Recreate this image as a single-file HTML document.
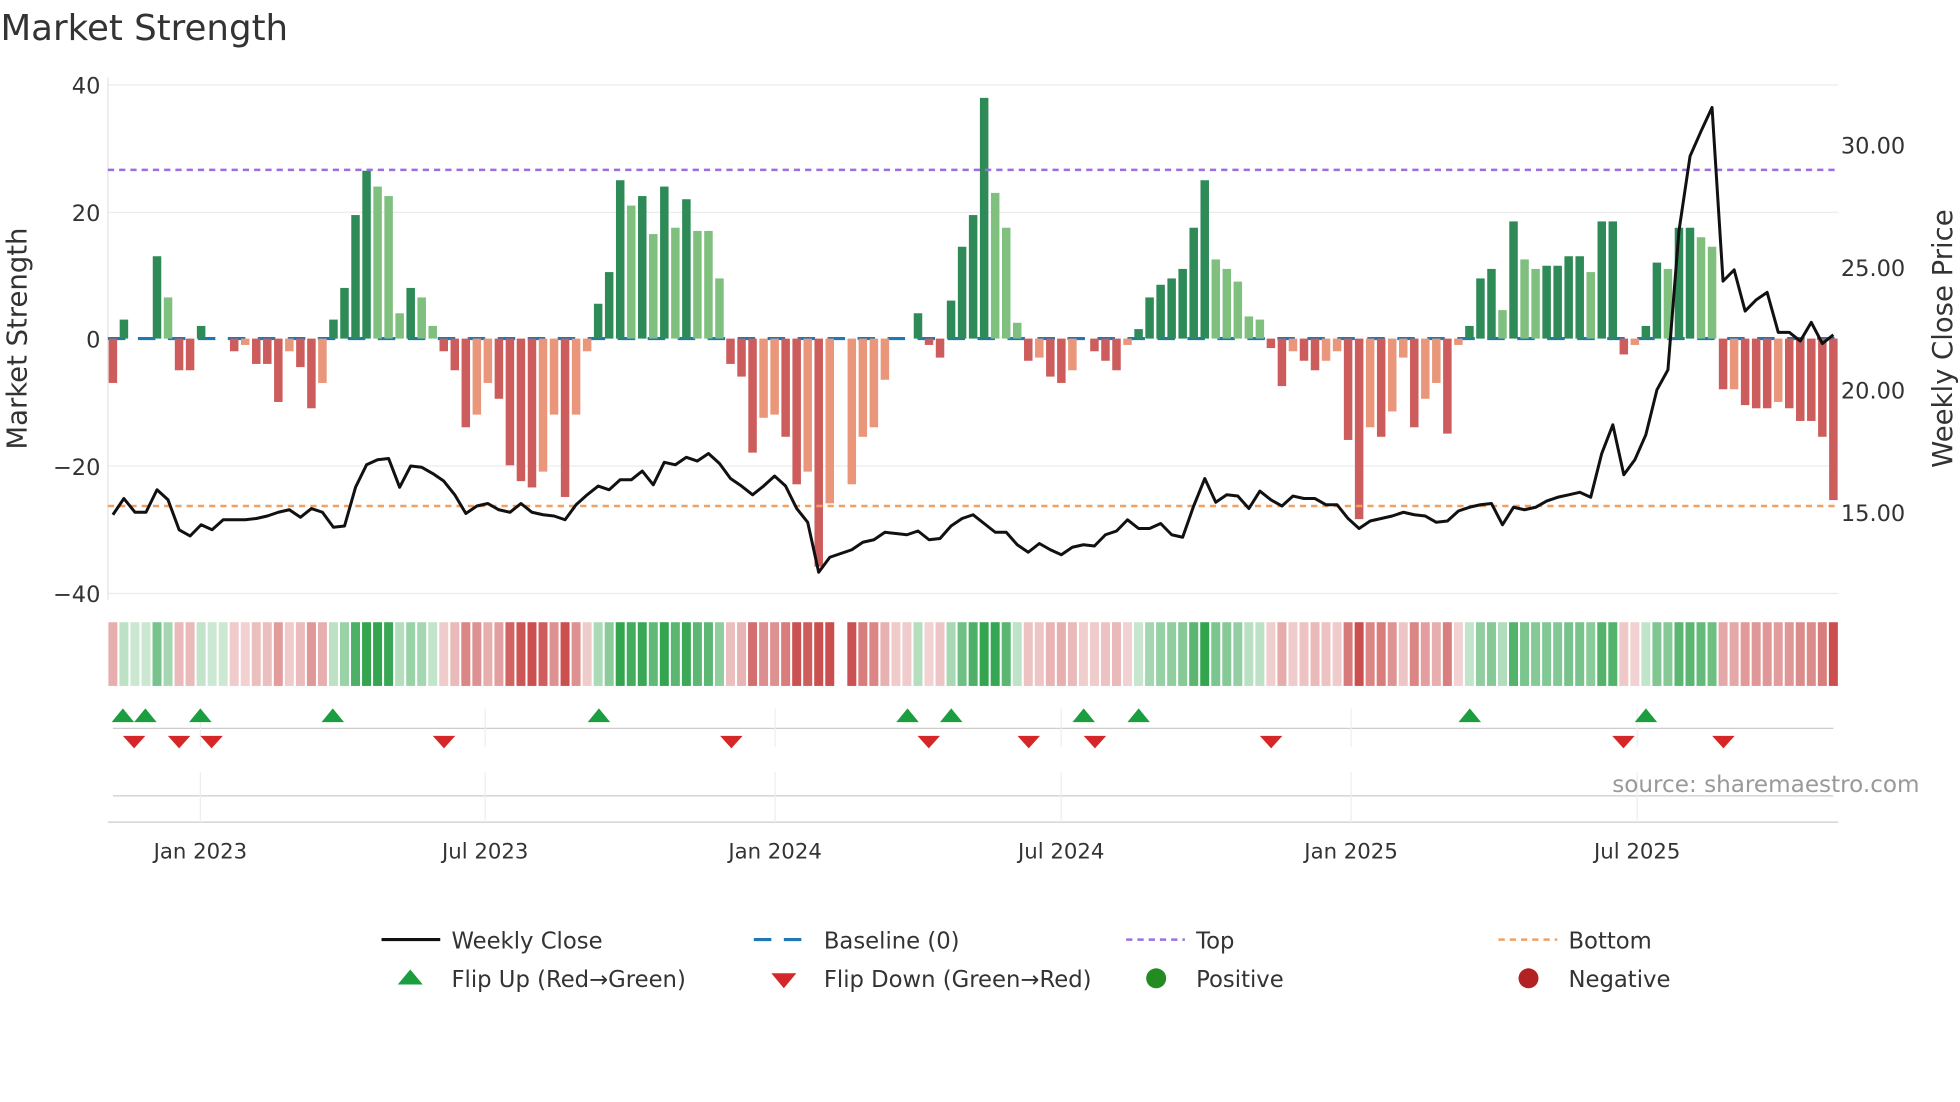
<!DOCTYPE html>
<html><head><meta charset="utf-8"><style>
html,body{margin:0;padding:0;background:#fff;width:1960px;height:1102px;overflow:hidden}
svg{display:block;font-family:"DejaVu Sans","Liberation Sans",sans-serif}
</style></head><body>
<svg id="s" width="1960" height="1102" viewBox="0 0 1568 882" xmlns="http://www.w3.org/2000/svg">
<rect width="1568" height="882" fill="#fff"/>
<text x="0" y="32" font-size="28.5" fill="#333">Market Strength</text>
<g stroke="#ececec" stroke-width="1">
<line x1="86" y1="68" x2="1471" y2="68"/><line x1="86" y1="170" x2="1471" y2="170"/>
<line x1="86" y1="373" x2="1471" y2="373"/><line x1="86" y1="475" x2="1471" y2="475"/>
</g>
<line x1="86" y1="62" x2="86" y2="480" stroke="#e4e4e4"/>
<g font-size="18" fill="#333" text-anchor="end">
<text x="80" y="75">40</text><text x="80" y="177">20</text><text x="80" y="278">0</text>
<text x="80" y="380">−20</text><text x="80" y="482">−40</text></g>
<g font-size="18" fill="#333">
<text x="1473" y="123">30.00</text><text x="1473" y="221">25.00</text>
<text x="1473" y="319">20.00</text><text x="1473" y="417">15.00</text></g>
<text transform="translate(21,271) rotate(-90)" font-size="22" fill="#333" text-anchor="middle">Market Strength</text>
<text transform="translate(1562,271) rotate(-90)" font-size="22" fill="#333" text-anchor="middle">Weekly Close Price</text>
<line x1="86" y1="271" x2="1471" y2="271" stroke="#1f77b4" stroke-width="2.5" stroke-dasharray="14,10"/>
<g id="bars"></g>
<line x1="86" y1="136" x2="1471" y2="136" stroke="#9b6fe0" stroke-width="2" stroke-dasharray="5,4"/>
<line x1="86" y1="405" x2="1471" y2="405" stroke="#f0a060" stroke-width="2" stroke-dasharray="5,4"/>
<polyline id="price" fill="none" stroke="#111" stroke-width="2.4" stroke-linejoin="round"/>
<g id="heat"></g>
<line x1="90" y1="583" x2="1467" y2="583" stroke="#ccc"/>
<line x1="90" y1="637" x2="1467" y2="637" stroke="#ccc"/>
<line x1="86" y1="658" x2="1471" y2="658" stroke="#ccc"/>
<g stroke="#eee"><line x1="160" y1="567" x2="160" y2="598"/><line x1="388" y1="567" x2="388" y2="598"/><line x1="620" y1="567" x2="620" y2="598"/><line x1="849" y1="567" x2="849" y2="598"/><line x1="1081" y1="567" x2="1081" y2="598"/><line x1="1310" y1="567" x2="1310" y2="598"/>
<line x1="160" y1="618" x2="160" y2="658"/><line x1="388" y1="618" x2="388" y2="658"/><line x1="620" y1="618" x2="620" y2="658"/><line x1="849" y1="618" x2="849" y2="658"/><line x1="1081" y1="618" x2="1081" y2="658"/><line x1="1310" y1="618" x2="1310" y2="658"/></g>
<g id="marks"></g>
<text x="1536" y="634" font-size="18.5" fill="#999" text-anchor="end">source: sharemaestro.com</text>
<g font-size="17" fill="#333" text-anchor="middle">
<text x="160" y="687">Jan 2023</text><text x="388" y="687">Jul 2023</text><text x="620" y="687">Jan 2024</text>
<text x="849" y="687">Jul 2024</text><text x="1081" y="687">Jan 2025</text><text x="1310" y="687">Jul 2025</text></g>
<g font-size="18.2" fill="#333">
<line x1="305" y1="752" x2="352" y2="752" stroke="#111" stroke-width="2.5"/><text x="361" y="759">Weekly Close</text>
<line x1="603" y1="752" x2="650" y2="752" stroke="#1f77b4" stroke-width="2.5" stroke-dasharray="14,10"/><text x="659" y="759">Baseline (0)</text>
<line x1="901" y1="752" x2="948" y2="752" stroke="#9b6fe0" stroke-width="2" stroke-dasharray="5,4"/><text x="957" y="759">Top</text>
<line x1="1199" y1="752" x2="1246" y2="752" stroke="#f0a060" stroke-width="2" stroke-dasharray="5,4"/><text x="1255" y="759">Bottom</text>
<polygon points="318,788 338,788 328,776" fill="#1a9e3f"/><text x="361" y="790">Flip Up (Red→Green)</text>
<polygon points="617,779 637,779 627,791" fill="#d62728"/><text x="659" y="790">Flip Down (Green→Red)</text>
<circle cx="925" cy="783" r="8" fill="#228b22"/><text x="957" y="790">Positive</text>
<circle cx="1223" cy="783" r="8" fill="#b22222"/><text x="1255" y="790">Negative</text>
</g>
</svg>
<script>
var NS="http://www.w3.org/2000/svg";
var B=[[-7,3],[3,1],[0,0],[0,0],[13,1],[6.5,2],[-5,3],[-5,3],[2,1],[0,0],[0,0],[-2,3],[-1,4],[-4,3],[-4,3],[-10,3],[-2,4],[-4.5,3],[-11,3],[-7,4],[3,1],[8,1],[19.5,1],[26.5,1],[24,2],[22.5,2],[4,2],[8,1],[6.5,2],[2,2],[-2,3],[-5,3],[-14,3],[-12,4],[-7,4],[-9.5,3],[-20,3],[-22.5,3],[-23.5,3],[-21,4],[-12,4],[-25,3],[-12,4],[-2,4],[5.5,1],[10.5,1],[25,1],[21,2],[22.5,1],[16.5,2],[24,1],[17.5,2],[22,1],[17,2],[17,2],[9.5,2],[-4,3],[-6,3],[-18,3],[-12.5,4],[-12,4],[-15.5,3],[-23,3],[-21,4],[-36,3],[-26,4],[0,0],[-23,4],[-15.5,4],[-14,4],[-6.5,4],[0,0],[0,0],[4,1],[-1,3],[-3,3],[6,1],[14.5,1],[19.5,1],[38,1],[23,2],[17.5,2],[2.5,2],[-3.5,3],[-3,4],[-6,3],[-7,3],[-5,4],[0,0],[-2,3],[-3.5,3],[-5,3],[-1,4],[1.5,1],[6.5,1],[8.5,1],[9.5,1],[11,1],[17.5,1],[25,1],[12.5,2],[11,2],[9,2],[3.5,2],[3,2],[-1.5,3],[-7.5,3],[-2,4],[-3.5,3],[-5,3],[-3.5,4],[-2,4],[-16,3],[-28.5,3],[-14,4],[-15.5,3],[-11.5,4],[-3,4],[-14,3],[-9.5,4],[-7,4],[-15,3],[-1,4],[2,1],[9.5,1],[11,1],[4.5,2],[18.5,1],[12.5,2],[11,2],[11.5,1],[11.5,1],[13,1],[13,1],[10.5,2],[18.5,1],[18.5,1],[-2.5,3],[-1,4],[2,1],[12,1],[11,2],[17.5,1],[17.5,1],[16,2],[14.5,2],[-8,3],[-8,4],[-10.5,3],[-11,3],[-11,3],[-10,4],[-11,3],[-13,3],[-13,3],[-15.5,3],[-25.5,3]];
var P=[412,399,410,410,392,400,424,429,420,424,416,416,416,415,413,410,408,414,407,410,422,421,390,372,368,367,390,373,374,379,385,396,411,405,403,408,410,403,410,412,413,416,404,396,389,392,384,384,377,388,370,372,366,369,363,371,383,389,396,389,381,389,407,418,458,446,443,440,434,432,426,427,428,425,432,431,421,415,412,419,426,426,436,442,435,440,444,438,436,437,428,425,416,423,423,419,428,430,405,383,402,396,397,407,393,400,405,397,399,399,404,404,415,423,417,415,413,410,412,413,418,417,409,406,404,403,420,406,408,406,401,398,396,394,398,363,340,380,368,348,312,296,185,125,105,86,225,216,249,240,234,266,266,273,258,275,268];
var n=B.length,step=(1467-90)/(n-1),cols={1:"#2e8b57",2:"#7fc07f",3:"#cd5c5c",4:"#e9967a"};
var g=document.getElementById("bars"),h=document.getElementById("heat"),pts=[];
function r(p,x,y,w,hh,f){var e=document.createElementNS(NS,"rect");e.setAttribute("x",x);e.setAttribute("y",y);e.setAttribute("width",w);e.setAttribute("height",hh);e.setAttribute("fill",f);p.appendChild(e);}
var prev=0;
for(var i=0;i<n;i++){var x=90+i*step,v=B[i][0],t=B[i][1];
 if(t){var y=271-v*5.07;r(g,x-3.4,Math.min(y,271),6.8,Math.abs(v*5.07),cols[t]);}
 if(i==66)continue;
 var vv=v;if(!t)vv=prev*0.3;else prev=v;
 var a=Math.min(0.95,0.22+Math.abs(vv)/32);var c=vv>=0?"rgba(40,160,70,"+a+")":"rgba(200,70,70,"+a+")";r(h,x-3.6,498,7.2,51,c);
}
var m=Math.min(n,P.length);for(i=0;i<m;i++)pts.push((90+i*step).toFixed(1)+","+P[i]);
document.getElementById("price").setAttribute("points",pts.join(" "));
var mk=document.getElementById("marks");
[98,116,160,266,479,726,761,867,911,1176,1317].forEach(function(x){var p=document.createElementNS(NS,"polygon");p.setAttribute("points",(x-9)+",578 "+(x+9)+",578 "+x+",567");p.setAttribute("fill","#1a9e3f");mk.appendChild(p);});
[107,143,169,355,585,743,823,876,1017,1299,1379].forEach(function(x){var p=document.createElementNS(NS,"polygon");p.setAttribute("points",(x-9)+",589 "+(x+9)+",589 "+x+",599");p.setAttribute("fill","#d62728");mk.appendChild(p);});
</script>
</body></html>
